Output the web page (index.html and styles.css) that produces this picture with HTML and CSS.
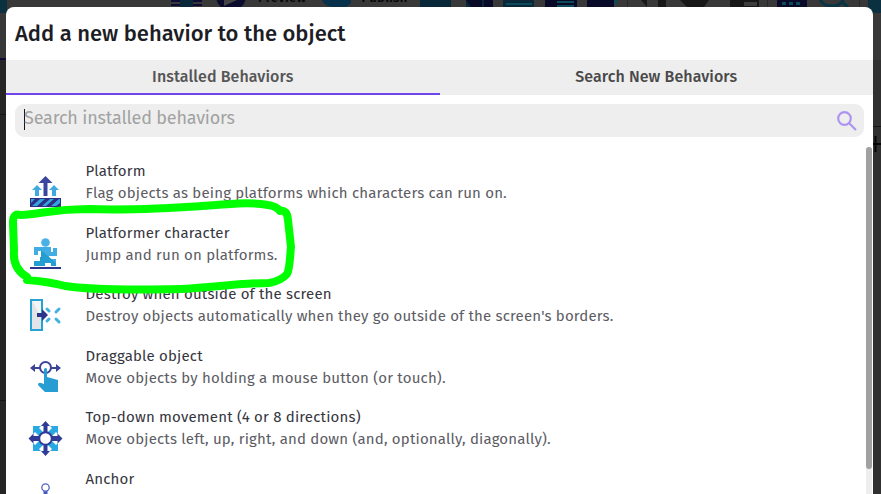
FILE: index.html
```html
<!DOCTYPE html>
<html lang="en">
<head>
<meta charset="utf-8">
<title>Add a new behavior</title>
<link rel="stylesheet" href="styles.css">
</head>
<body>
<svg class="backdrop" width="881" height="494" viewBox="0 0 881 494" aria-hidden="true">
  <path fill="#383838" d="M0 0h881v60H0z"/>
  <path fill="#0b3040" d="M0 0h7v13H0zM868 0h13v13h-13z"/>
  <path fill="#08283a" d="M180 0h13v7h-13zM420 0h31v7h-31zM466 0h27v7h-27zM503 0h31v7h-31z"/>
  <path stroke="#0c0b35" stroke-width="2" d="M171 1h9M171 5h9M193 1h9M193 5h9M0 59h6"/>
  <circle cx="231" cy="-4" r="15" fill="#0b0b2e"/><path fill="#444" d="M224 0h13l-13 6z"/>
  <path fill="#07304a" d="M322 0h29v3l-5 4h-13q-9-1-11-7z"/>
  <path fill="#090928" d="M466 0h16v7h-11zM484 0h9v7h-9zM545 0h32v7h-32zM587 0h27v7h-27zM777 0h30v7h-30z"/>
  <path fill="#0b4b5b" d="M506 3h26v2h-26zM557 1h17v2h-17zM557 5h17v2h-17zM614 0h3v4h-3zM782 2h4v3h-4zM789 2h4v3h-4zM796 2h4v3h-4z"/>
  <path fill="#171717" d="M641 0h6v7zM658 0h8v7h-8zM680 0h29l-5 7h-17zM730 0h29v7h-29z"/>
  <path fill="#3d3d3d" d="M744 2h13v4h-13z"/>
  <path fill="none" stroke="#093443" stroke-width="3" d="M820 0q4 6 12 6t11-6M842 2l6 5"/>
  <path fill="none" stroke="#292929" d="M627.500 0v7M767.500 0v7M859.500 0v7"/>
  <path fill="none" stroke="#151515" d="M0 114.500h6M873 126.500h8M0 400.500h6"/>
  <path stroke="#050505" stroke-width="2" d="M871 144h10M875.500 136v16"/>
</svg>
<div class="toolbar"><span class="preview">Preview</span><span class="publish">Publish</span></div>
<main class="dialog">
  <h1>Add a new behavior to the object</h1>
  <nav class="tabs"><div class="tab active">Installed Behaviors</div><div class="tab search-tab">Search New Behaviors</div></nav>
  <div class="search"><span class="caret"></span><span class="placeholder">Search installed behaviors</span>
    <svg class="magnifier" width="22" height="22" viewBox="0 0 22 22"><circle cx="8.500" cy="8.500" r="6.300"/><path d="m13 13 7 7"/></svg>
  </div>
  <section class="list">
    <article class="row">
      <svg width="36" height="36" viewBox="0 0 36 36"><path fill="#39479f" d="m17.500 0 7 7h-5v13h-4V7h-5z"/><path fill="#40a9df" d="m9 9 5 5h-3v6H7v-6H4zM26 9l5 5h-3v6h-4v-6h-3z"/><path fill="#2b3085" d="M2 22h31v9H2z"/><path fill="#34a3df" d="m4 30 8-7h5l-8 7zM14 30l8-7h4l-8 7zM23 30l8-7h1v4l-4 3zM3 23h4l-4 4z"/></svg>
      <div class="copy"><h2>Platform</h2><p>Flag objects as being platforms which characters can run on.</p></div>
    </article>
    <article class="row">
      <svg width="36" height="36" viewBox="0 0 36 36"><circle cx="17.500" cy="4.500" r="4.300" fill="#4bb0e4"/><path fill="#42ade2" d="M6 9h17v5h2v-4h4v8h-8v3h7v7h-5v-3h-6v3H6v-5h6v-4h1v-6h-3v4H6z"/><path fill="#249dd3" d="m13 12 15 13v3h-5v-3h-6v3H6v-5h6v-4h1z"/><path fill="#2c348c" d="M2 29h31v2H2z"/></svg>
      <div class="copy"><h2>Platformer character</h2><p>Jump and run on platforms.</p></div>
    </article>
    <article class="row">
      <svg width="36" height="36" viewBox="0 0 36 36"><path fill="#e3e4e8" stroke="#27a2d5" stroke-width="2" d="M3 1h11v30H3z"/><path fill="#f4f4f4" d="M4 2h9v16z"/><path fill="#2c3589" d="M9 14h5v-4l6 6-6 6v-4H9z"/><path stroke="#45b1e2" stroke-width="3" stroke-linecap="round" d="m19 10 2 2m10-2-3 3M19 22l2-2m7 0 3 3"/></svg>
      <div class="copy"><h2>Destroy when outside of the screen</h2><p>Destroy objects automatically when they go outside of the screen's borders.</p></div>
    </article>
    <article class="row">
      <svg width="36" height="36" viewBox="0 0 36 36"><path fill="#3c449a" d="m2 7 5-4v3h5v2H7v3zM33 7l-5-4v3h-5v2h5v3z"/><circle cx="17.500" cy="6.500" r="5.500" fill="#fff" stroke="#3c449a" stroke-width="2"/><path fill="#279dd3" d="M16 8q2-2 3 0v8l11 3v12H17l-7-7q0-3 3-2l3 1z"/></svg>
      <div class="copy"><h2>Draggable object</h2><p>Move objects by holding a mouse button (or touch).</p></div>
    </article>
    <article class="row">
      <svg class="raised" width="36" height="36" viewBox="0 0 36 36"><path fill="#29a9e1" d="M5 5h8l-2 2 5 5-4 4-5-5-2 2zM30 5v8l-2-2-5 5-4-4 5-5-2-2zM5 30v-8l2 2 5-5 4 4-5 5 2 2zM30 30h-8l2-2-5-5 4-4 5 5 2-2z"/><path fill="#303b97" d="m17.500 0 4.500 5h-2.500v10h10v-2.500l5 5-5 5v-2.500h-10v10H22l-4.500 5-4.500-5h2.500V20h-10v2.500l-5-5 5-5V15h10V5H13z"/><circle cx="17.500" cy="17.500" r="6.300" fill="#fff" stroke="#303b97" stroke-width="2"/></svg>
      <div class="copy"><h2>Top-down movement (4 or 8 directions)</h2><p>Move objects left, up, right, and down (and, optionally, diagonally).</p></div>
    </article>
    <article class="row">
      <svg class="raised" width="36" height="36" viewBox="0 0 36 36"><path fill="#4658b8" d="M15.500 8h4v20h-4z"/><circle cx="17.500" cy="4.500" r="3.700" fill="#fff" stroke="#5264c3" stroke-width="1.300"/></svg>
      <div class="copy"><h2>Anchor</h2></div>
    </article>
  </section>
  <div class="scrollbar"><div class="thumb"></div></div>
</main>
<svg class="marker" width="881" height="494" viewBox="0 0 881 494"><path d="M27 277C17 271 13 262 14 251L13 222Q13 213 20 215C43 214 51 209 89 209C145 211 197 206 231 204Q250 202 268 205Q276 206 280 211Q287 209 288 220L291 247C290 255 290 269 287 274Q281 281 269 283C239 283 208 288 181 289C132 290 90 290 65 286C50 282 38 281 27 280"/></svg>
</body>
</html>
```
FILE: styles.css
```css
* { box-sizing: border-box; }
body { margin: 0; width: 881px; height: 494px; overflow: hidden; background: linear-gradient(90deg, #252525, #303030); font-family: "Fira Sans", "Noto Sans", sans-serif; position: relative; }
.backdrop, .marker { position: absolute; left: 0; top: 0; }
.toolbar { position: absolute; left: 258px; top: -11px; display: flex; gap: 55px; font-size: 13px; line-height: 18px; font-weight: 600; color: #080808; letter-spacing: .3px; }
.dialog { position: relative; margin: 7px 0 0 6px; width: 867px; height: 487px; background: #fff; border-radius: 8px 8px 0 0; overflow: hidden; }
h1, h2, p { margin: 0; white-space: nowrap; }
h1 { height: 53px; padding-left: 9px; font-size: 22px; line-height: 53px; font-weight: 500; color: #1d1d26; }
.tabs { display: flex; height: 35px; background: #eee; }
.tab { flex: 1; text-align: center; font-size: 16px; line-height: 33px; font-weight: 500; color: #555; letter-spacing: .08px; }
.active { border-bottom: 2px solid #7046ec; }
.search-tab { color: #494949; }
.search { margin: 9px 9px 0; height: 33px; border-radius: 9px; background: #eee; display: flex; align-items: center; padding: 0 6px 0 9px; }
.caret { width: 1px; height: 21px; background: #151525; margin-top: -3px; }
.placeholder { font-size: 18px; color: #a2a2a2; line-height: 27px; margin: -5px 0 0 -1px; letter-spacing: -.18px; }
.magnifier { margin-left: auto; fill: none; stroke: #ad94f1; stroke-width: 2.2; }
.list { padding: 23px 0 0 22px; }
.row { height: 61.6px; display: flex; align-items: flex-start; }
.row > svg { flex: none; margin-top: 16px; overflow: visible; }
.row > .raised { margin-top: 15px; }
.copy { margin-left: 21.500px; }
h2, p { font-size: 15px; line-height: 22px; font-weight: 400; letter-spacing: .18px; }
h2 { color: #36363e; }
p { color: #5c5c64; }
.scrollbar { position: absolute; right: 1px; top: 140px; width: 6px; height: 347px; background: #eee; border-radius: 3px 3px 0 0; }
.thumb { height: 322px; background: #a1a1a1; border-radius: 3px; }
.marker { pointer-events: none; fill: none; stroke: #00ff00; stroke-width: 8; stroke-linejoin: round; stroke-linecap: round; }
```
